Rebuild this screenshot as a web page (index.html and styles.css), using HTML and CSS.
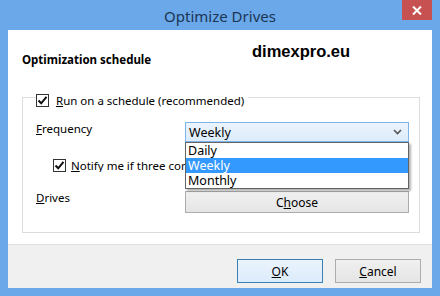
FILE: index.html
```html
<!DOCTYPE html>
<html lang="en">
<head>
  <meta charset="UTF-8" />
  <title>Optimize Drives</title>
  <link rel="stylesheet" href="styles.css">
</head>
<body>
  <div class="window">
    <div class="titlebar">
      <span class="title">Optimize Drives</span>
      <span class="close-btn">
        <svg width="10" height="9" viewBox="0 0 10 9"><path d="M1 0.5 L9 8.5 M9 0.5 L1 8.5" stroke="#fff" stroke-width="2"/></svg>
      </span>
    </div>

    <div class="client">
      <div class="content">
        <div class="heading-row">
          <h3>Optimization schedule</h3>
          <span class="brand">dimexpro.eu</span>
        </div>

        <div class="group">
          <div class="legend">
            <span class="checkbox checked">
              <svg width="11" height="11" viewBox="0 0 11 11"><path d="M1.5 5.5 L4.2 8.3 L9.5 1.8" fill="none" stroke="#111" stroke-width="2"/></svg>
            </span>
            <span><u>R</u>un on a schedule (recommended)</span>
          </div>

          <div class="row freq-row">
            <span class="label"><u>F</u>requency</span>
            <div class="combo-wrap">
              <div class="combo">
                <span>Weekly</span>
                <svg width="9" height="6" viewBox="0 0 9 6"><path d="M1 1 L4.5 4.5 L8 1" fill="none" stroke="#555" stroke-width="1.6"/></svg>
              </div>
              <ul class="dropdown">
                <li>Daily</li>
                <li class="selected">Weekly</li>
                <li>Monthly</li>
              </ul>
            </div>
          </div>

          <div class="row notify-row">
            <span class="checkbox checked">
              <svg width="11" height="11" viewBox="0 0 11 11"><path d="M1.5 5.5 L4.2 8.3 L9.5 1.8" fill="none" stroke="#111" stroke-width="2"/></svg>
            </span>
            <span><u>N</u>otify me if three consecutive scheduled runs are missed</span>
          </div>

          <div class="row drives-row">
            <span class="label"><u>D</u>rives</span>
            <button class="btn wide">C<u>h</u>oose</button>
          </div>
        </div>
      </div>

      <div class="footer">
        <button class="btn default"><u>O</u>K</button>
        <button class="btn"><u>C</u>ancel</button>
      </div>
    </div>
  </div>
</body>
</html>
```

FILE: styles.css
```css
body {
  margin: 0;
  padding: 0;
  font-family: "Noto Sans", "Liberation Sans", sans-serif;
  font-size: 11.5px;
  color: #000;
}

.window {
  width: 440px;
  height: 296px;
  background-color: #6aa8ea;
  display: flex;
  flex-direction: column;
}

.titlebar {
  height: 30px;
  position: relative;
  display: flex;
  align-items: center;
  justify-content: center;
}

.title {
  font-size: 15px;
  color: #1b3553;
  margin-top: 1px;
}

.close-btn {
  position: absolute;
  top: 0;
  right: 8px;
  width: 30px;
  height: 20px;
  background-color: #c75050;
  display: flex;
  align-items: center;
  justify-content: center;
}

.client {
  margin: 0 8px 8px;
  flex: 1;
  display: flex;
  flex-direction: column;
  background-color: #f0f0f0;
}

.content {
  height: 214px;
  background-color: #fff;
  border-bottom: 1px solid #dfdfdf;
  padding: 0 12px 0 14px;
}

.heading-row {
  display: flex;
  align-items: flex-start;
  height: 54px;
}

.heading-row h3 {
  margin: 22px 0 0;
  font-size: 11.5px;
  font-weight: bold;
  width: 230px;
}

.brand {
  margin-top: 12px;
  font-family: "Liberation Sans", sans-serif;
  font-size: 16.5px;
  font-weight: bold;
}

.group {
  height: 134px;
  border: 1px solid #dcdcdc;
  margin-top: 13px;
  padding: 0 10px 0 13px;
}

.legend {
  display: flex;
  width: fit-content;
  align-items: center;
  gap: 7px;
  background-color: #fff;
  margin-top: -6px;
  padding-right: 4px;
  height: 16px;
}

.checkbox {
  width: 13px;
  height: 13px;
  flex-shrink: 0;
  box-sizing: border-box;
  border: 1px solid #333;
  background-color: #fff;
  display: inline-flex;
  align-items: center;
  justify-content: center;
}

.row {
  display: flex;
  align-items: center;
}

.label {
  width: 149px;
  align-self: flex-start;
  line-height: 16px;
  margin-top: -1px;
}

.freq-row {
  margin-top: 14px;
  height: 20px;
}

.combo-wrap {
  position: relative;
  width: 224px;
}

.combo {
  height: 20px;
  box-sizing: border-box;
  border: 1px solid #7eb4ea;
  background: linear-gradient(#ecf4fc, #dcecfc);
  display: flex;
  align-items: center;
  justify-content: space-between;
  padding: 0 6px 0 3px;
  font-size: 12.5px;
}

.dropdown {
  position: absolute;
  top: 20px;
  left: 0;
  width: 224px;
  box-sizing: border-box;
  margin: 0;
  padding: 0;
  list-style: none;
  background-color: #fff;
  border: 1px solid #646464;
  box-shadow: 2px 2px 2px rgba(0, 0, 0, 0.3);
  z-index: 5;
}

.dropdown li {
  height: 15px;
  line-height: 15px;
  padding-left: 2px;
  font-size: 12.5px;
}

.dropdown li.selected {
  background-color: #3399ff;
  color: #fff;
}

.notify-row {
  margin-top: 16px;
  height: 14px;
  padding-left: 17px;
  gap: 5px;
  white-space: nowrap;
  overflow: hidden;
}

.drives-row {
  margin-top: 19px;
}

.btn {
  font-family: "Noto Sans", "Liberation Sans", sans-serif;
  font-size: 12px;
  color: #000;
  height: 24px;
  border: 1px solid #acacac;
  background: linear-gradient(#f0f0f0, #e5e5e5);
  padding: 0;
}

.btn.wide {
  width: 224px;
  height: 22px;
}

.footer {
  flex: 1;
  display: flex;
  justify-content: flex-end;
  align-items: flex-start;
  gap: 12px;
  padding-right: 11px;
  padding-top: 14px;
}

.footer .btn {
  width: 86px;
}

.btn.default {
  border-color: #3c7fb1;
  background: linear-gradient(#eaf3fb, #dcecfc);
}
```
